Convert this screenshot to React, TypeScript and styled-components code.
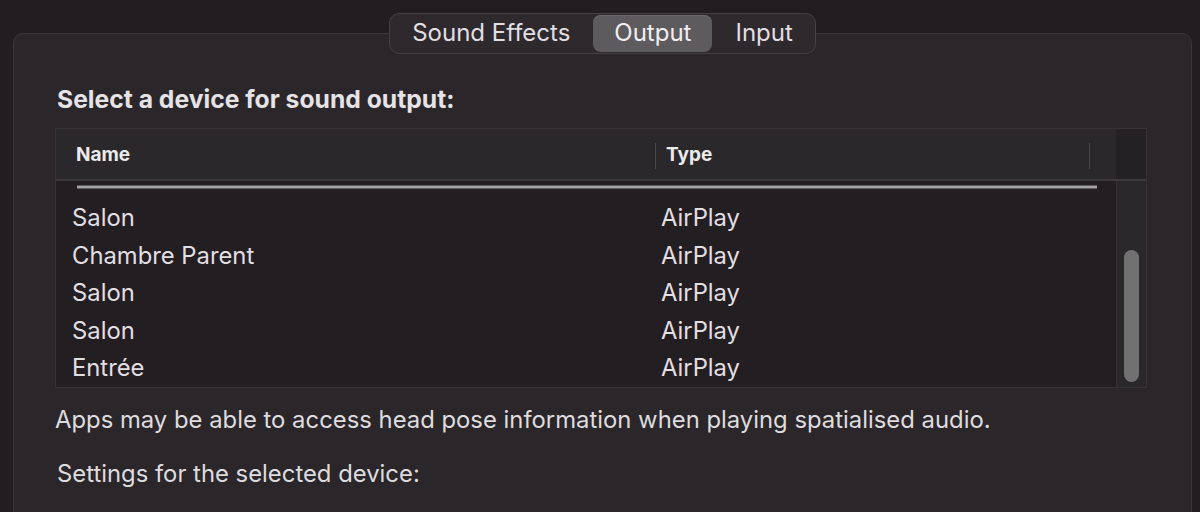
import React from "react";
import styled, { createGlobalStyle } from "styled-components";

const Global = createGlobalStyle`
  html, body { margin: 0; padding: 0; background: #211d21; }
  body {
    font-family: Inter, "Noto Sans", "Liberation Sans", sans-serif;
    color: #dfdcdf;
    -webkit-font-smoothing: antialiased;
  }
`;

const Page = styled.div`
  width: 1200px;
  height: 512px;
  overflow: hidden;
  padding-top: 13px;
  box-sizing: border-box;
`;

const TabRow = styled.div`
  display: flex;
  justify-content: center;
  padding-left: 5px;
  position: relative;
  z-index: 2;
`;

const Segmented = styled.div`
  display: flex;
  gap: 2px;
  height: 41px;
  box-sizing: border-box;
  padding: 1px;
  border: 1px solid #444044;
  border-radius: 10px;
  background: #2d292d;
`;

const Segment = styled.div<{ $active?: boolean }>`
  display: flex;
  align-items: center;
  padding: 0 21px 2px;
  border-radius: 8px;
  font-size: 24px;
  line-height: 28px;
  color: ${(p) => (p.$active ? "#f0eef0" : "#e2dfe2")};
  background: ${(p) => (p.$active ? "#5e5b5e" : "transparent")};
  box-shadow: ${(p) => (p.$active ? "inset 0 1px 0 #6c696c" : "none")};
`;

const Panel = styled.div`
  margin: -21px 8px 0 13px;
  height: 520px;
  box-sizing: border-box;
  border: 1px solid #3a363a;
  border-radius: 10px;
  background: #2a262a;
  padding: 52px 44px 0 41px;
`;

const Heading = styled.div`
  margin-left: 2px;
  font-size: 24.7px;
  line-height: 26px;
  font-weight: 700;
  color: #e6e3e6;
`;

const Table = styled.div`
  margin-top: 16px;
  height: 260px;
  box-sizing: border-box;
  border: 1px solid #363236;
  display: grid;
  grid-template-columns: 1fr 30px;
  grid-template-rows: 52px 1fr;
  background: #221e22;
`;

const Header = styled.div`
  display: grid;
  grid-template-columns: 599px 1fr;
  background: #2b282b;
  border-bottom: 2px solid #3d3a3d;
`;

const HeaderCell = styled.div<{ $pad: number }>`
  display: flex;
  align-items: center;
  padding-left: ${(p) => p.$pad}px;
  font-size: 19px;
  font-weight: 700;
  color: #ecebec;
  position: relative;
  &::after {
    content: "";
    position: absolute;
    right: ${(p) => (p.$pad > 15 ? "-1px" : "26px")};
    top: 14px;
    bottom: 10px;
    width: 1px;
    background: #4b484b;
  }
`;

const Corner = styled.div`
  background: #242124;
  border-bottom: 2px solid #3d3a3d;
`;

const Body = styled.div`
  padding-top: 4px;
  overflow: hidden;
`;

const DropLine = styled.div`
  margin: 0 19px 0 21px;
  height: 4px;
  box-sizing: border-box;
  background: #a6a6a6;
  border-top: 1px solid #5a585a;
  border-bottom: 1px solid #5a585a;
`;

const Rows = styled.div`
  margin-top: 10px;
`;

const Row = styled.div`
  display: grid;
  grid-template-columns: 599px 1fr;
  height: 37.5px;
  align-items: center;
  font-size: 23.8px;
  color: #e2dfe2;
`;

const Cell = styled.div<{ $pad: number }>`
  padding-left: ${(p) => p.$pad}px;
`;

const Track = styled.div`
  background: #2a282a;
  border-left: 1px solid #343134;
  padding: 69px 0 4px 7px;
`;

const Thumb = styled.div`
  width: 15px;
  height: 132px;
  border-radius: 8px;
  background: #727172;
`;

const Note = styled.div<{ $mt: number; $ml: number }>`
  margin-top: ${(p) => p.$mt}px;
  margin-left: ${(p) => p.$ml}px;
  font-size: 23.85px;
  line-height: 28px;
  color: #dfdcdf;
  white-space: nowrap;
`;

const devices = [
  ["Salon", "AirPlay"],
  ["Chambre Parent", "AirPlay"],
  ["Salon", "AirPlay"],
  ["Salon", "AirPlay"],
  ["Entrée", "AirPlay"],
];

export default function App() {
  return (
    <Page>
      <Global />
      <TabRow>
        <Segmented>
          <Segment>Sound Effects</Segment>
          <Segment $active>Output</Segment>
          <Segment>Input</Segment>
        </Segmented>
      </TabRow>
      <Panel>
        <Heading>Select a device for sound output:</Heading>
        <Table>
          <Header>
            <HeaderCell $pad={20}>Name</HeaderCell>
            <HeaderCell $pad={11}>Type</HeaderCell>
          </Header>
          <Corner />
          <Body>
            <DropLine />
            <Rows>
              {devices.map(([n, t], i) => (
                <Row key={i}>
                  <Cell $pad={16}>{n}</Cell>
                  <Cell $pad={6}>{t}</Cell>
                </Row>
              ))}
            </Rows>
          </Body>
          <Track>
            <Thumb />
          </Track>
        </Table>
        <Note $mt={18} $ml={0}>
          Apps may be able to access head pose information when playing spatialised audio.
        </Note>
        <Note $mt={26} $ml={2}>
          Settings for the selected device:
        </Note>
      </Panel>
    </Page>
  );
}
